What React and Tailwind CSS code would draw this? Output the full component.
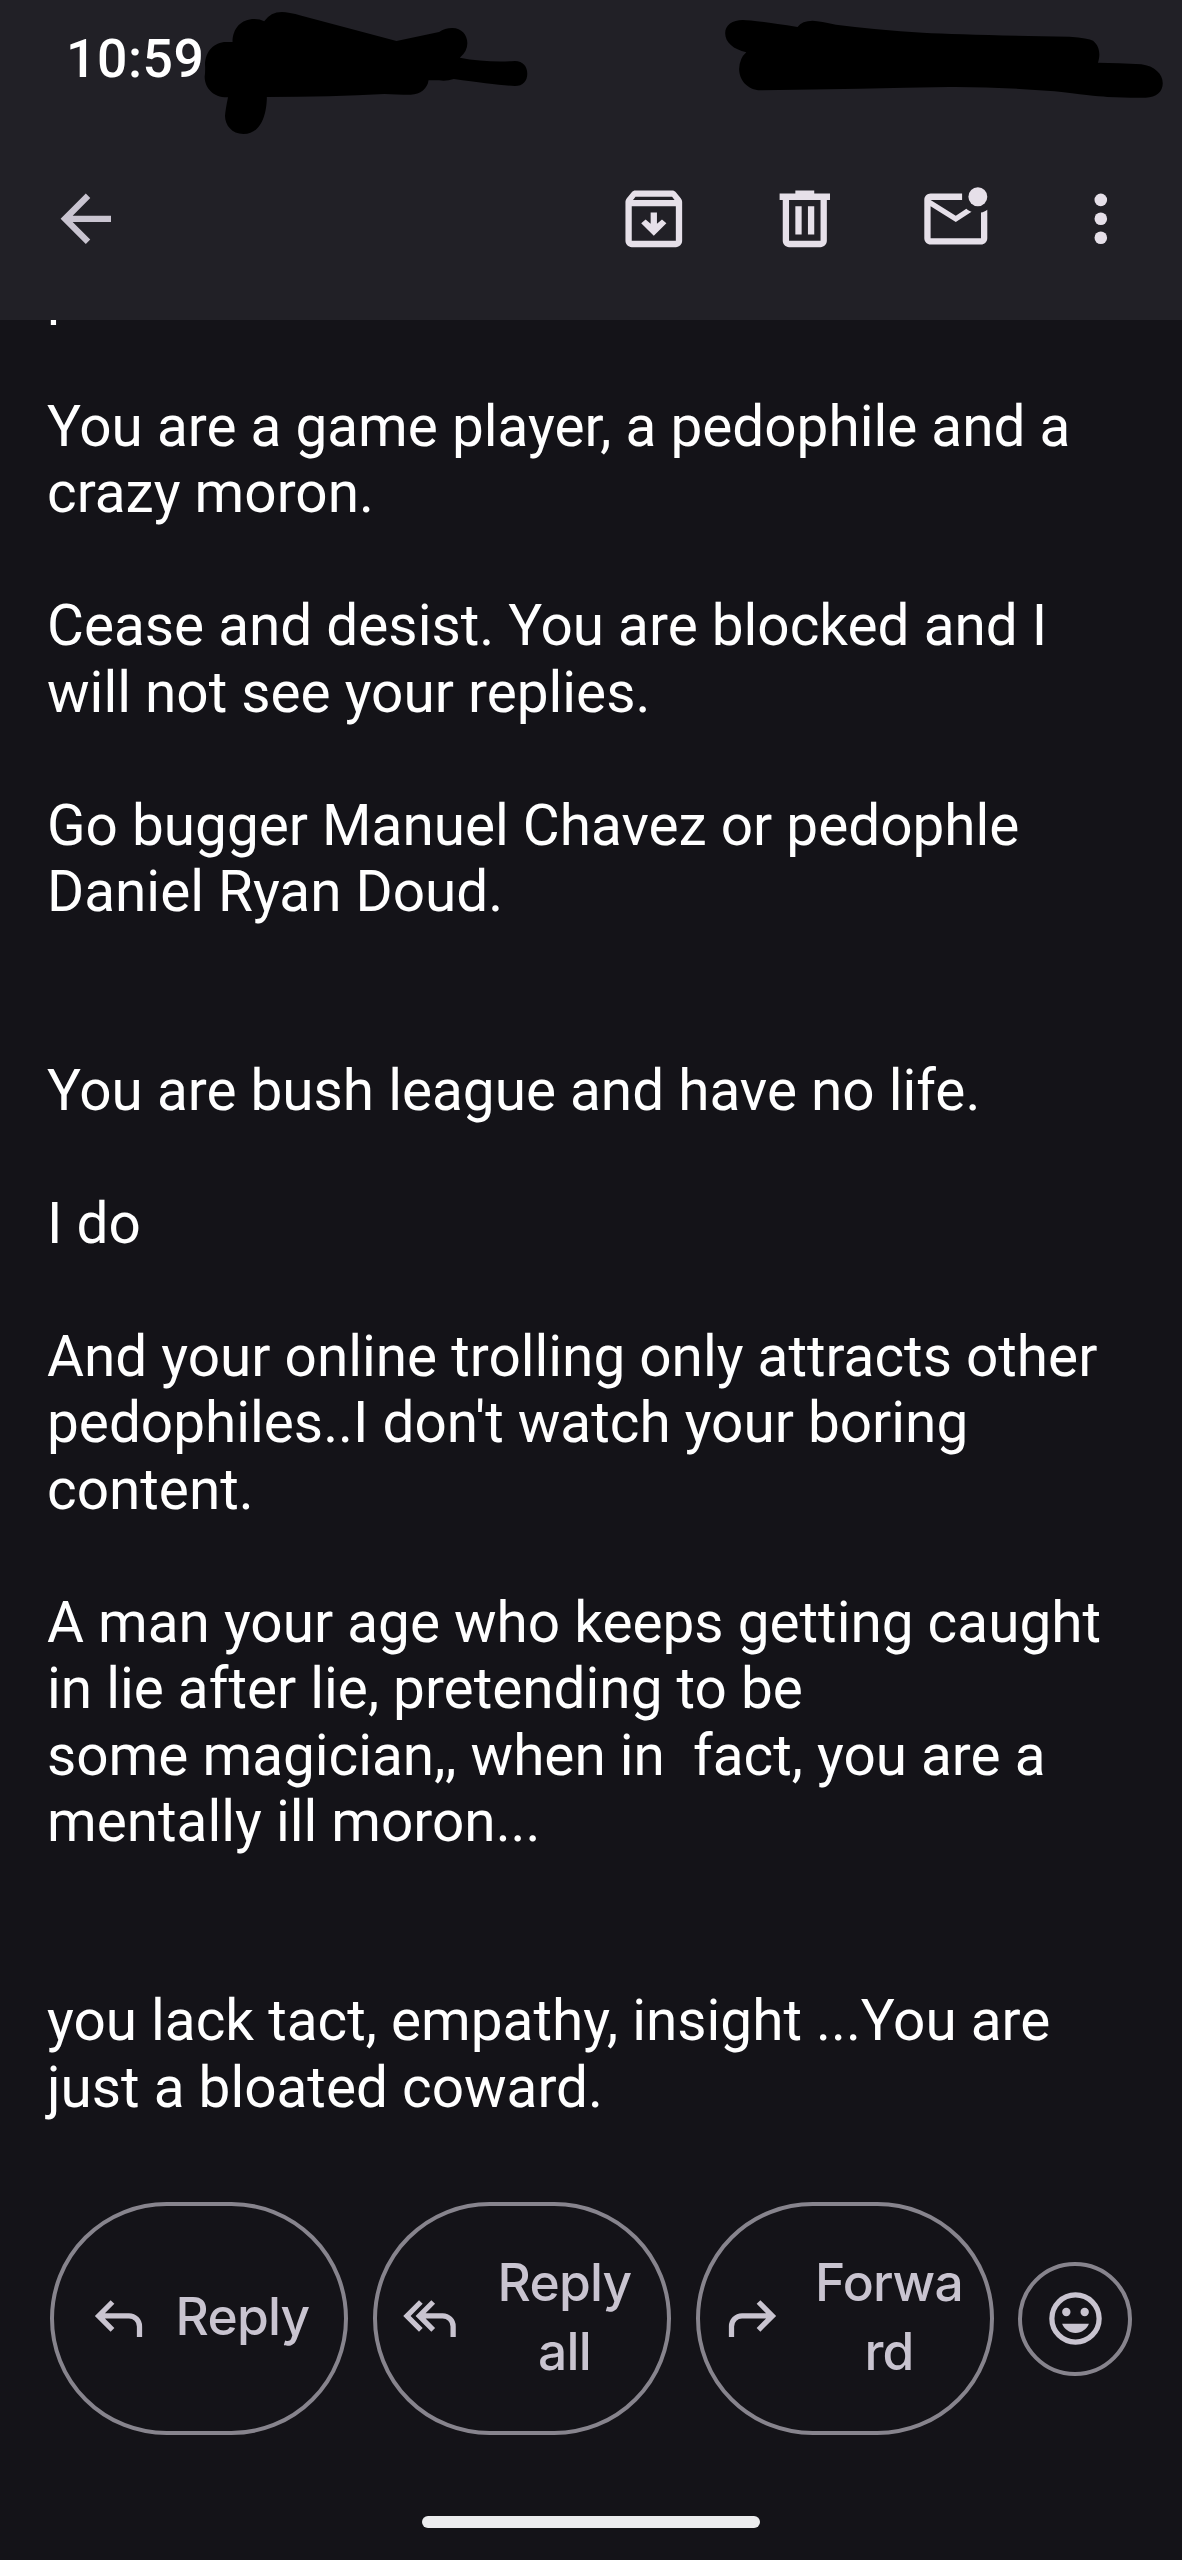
import clsx from 'clsx';

const lines = [
    'p',
    '',
    'You are a game player, a pedophile and a',
    'crazy moron.',
    '',
    'Cease and desist. You are blocked and I',
    'will not see your replies.',
    '',
    'Go bugger Manuel Chavez or pedophle',
    'Daniel Ryan Doud.',
    '',
    '',
    'You are bush league and have no life.',
    '',
    'I do',
    '',
    'And your online trolling only attracts other',
    "pedophiles..I don't watch your boring",
    'content.',
    '',
    'A man your age who keeps getting caught',
    'in lie after lie, pretending to be',
    'some magician,, when in  fact, you are a',
    'mentally ill moron...',
    '',
    '',
    'you lack tact, empathy, insight ...You are',
    'just a bloated coward.',
];

const Icon = ({ children, className }) => (
    <svg viewBox="0 0 24 24" fill="currentColor" className={clsx('shrink-0', className)}>
        {children}
    </svg>
);

const BackIcon = () => (
    <Icon className="size-[75.6px] text-[#c9c4d0]">
        <path d="M20 11H7.83l5.59-5.59L12 4l-8 8 8 8 1.41-1.41L7.83 13H20v-2z" />
    </Icon>
);

const ArchiveIcon = () => (
    <Icon className="size-[75.6px]">
        <path
            fillRule="evenodd"
            d="M6.2 3h11.6c.5 0 .9.2 1.2.6l1.5 1.8c.3.4.5.8.5 1.3V19c0 1.1-.9 2-2 2H5c-1.1 0-2-.9-2-2V6.7c0-.5.2-.9.5-1.3L5 3.6c.3-.4.7-.6 1.2-.6zM6.2 5l-.8 1h13.2l-.8-1H6.2zM5 8v11h14V8H5z"
        />
        <path d="M11 10h2v3.6l1.6-1.4 1.4 1.2-4 4-4-4 1.4-1.2 1.6 1.4z" />
    </Icon>
);

const TrashIcon = () => (
    <Icon className="size-[75.6px]">
        <path
            fillRule="evenodd"
            d="M9 3h6v1h5v2h-1v13c0 1.1-.9 2-2 2H7c-1.1 0-2-.9-2-2V6H4V4h5V3zM7 6v13h10V6H7z"
        />
        <path d="M9 8h2v9H9zM13 8h2v9h-2z" />
    </Icon>
);

const UnreadIcon = () => (
    <Icon className="size-[75.6px]">
        <path d="M14 4H4c-1.1 0-2 .9-2 2v12.2c0 1.1.9 2 2 2h16c1.1 0 2-.9 2-2V9.1c-.6.45-1.27.75-2 .9v8.2H4V8l8 5 5-3.2c-.6-.25-1.2-.6-1.65-1L12 11 4 6h10z" />
        <circle cx="19" cy="5" r="3" />
    </Icon>
);

const MoreIcon = () => (
    <Icon className="size-[75.6px]">
        <circle cx="12" cy="6" r="2" />
        <circle cx="12" cy="12" r="2" />
        <circle cx="12" cy="18" r="2" />
    </Icon>
);

const ReplyIcon = ({ className }) => (
    <Icon className={clsx('size-[63px]', className)}>
        <path d="M19 19v-4q0-1.25-.875-2.125T16 12H6.825l3.6 3.6L9 17l-6-6 6-6 1.425 1.4-3.6 3.6H16q2.075 0 3.538 1.463T21 15v4z" />
    </Icon>
);

const ReplyAllIcon = () => (
    <Icon className="size-[63px]">
        <path d="M8 17l-6-6 6-6 1.4 1.4L4.8 11l4.6 4.6zM20 19v-4q0-1.25-.875-2.125T17 12h-6.475l3.6 3.6L12.7 17l-6-6 6-6 1.425 1.4-3.6 3.6H17q2.075 0 3.538 1.463T22 15v4z" />
    </Icon>
);

const EmojiIcon = () => (
    <Icon className="size-[63px]">
        <circle cx="12" cy="12" r="9" fill="none" stroke="currentColor" strokeWidth="2" />
        <circle cx="8.5" cy="9.5" r="1.6" />
        <circle cx="15.5" cy="9.5" r="1.6" />
        <path d="M12 17.5c2.33 0 4.31-1.46 5.11-3.5H6.89c.8 2.04 2.78 3.5 5.11 3.5z" />
    </Icon>
);

// marker strokes drawn over the status bar
const Scribbles = () => (
    <svg viewBox="0 0 1182 140" className="absolute left-0 top-0 h-[140px] w-[1182px]">
        <g transform="scale(.3769 .3333)">
            <path d="M617 126C617 85 640 57 675 57Q690 57 701 64Q718 36 748 36Q765 36 800 47L1052 123L1165 96Q1180 84 1200 84C1225 84 1240 105 1240 130Q1240 155 1220 173Q1290 188 1366 183C1388 183 1399 200 1399 221C1399 242 1388 258 1366 258Q1310 254 1204 237Q1185 244 1165 241H1137C1135 265 1115 284 1090 284Q1050 284 1020 282Q880 291 708 291C708 330 698 402 646 402C615 402 597 375 597 348Q598 330 605 292C565 293 543 262 543 230Q545 215 544 195C544 155 568 126 600 126Z" />
        </g>
        <g transform="translate(591 0) scale(.3769 .3333)">
            <path d="M403 60Q430 60 548 81Q560 62 588 62Q610 64 650 74Q760 90 880 98Q1000 105 1270 110Q1320 114 1332 122C1350 138 1352 165 1345 188Q1400 189 1460 193C1495 198 1517 222 1517 250C1517 275 1500 293 1472 293Q1430 294 1370 291Q1330 288 1230 274Q1080 260 950 261Q720 266 450 271C415 270 393 240 393 207Q394 175 412 157C378 148 356 128 356 100C356 75 375 60 403 60Z" />
        </g>
    </svg>
);

const ActionButton = ({ children, className }) => (
    <button
        className={clsx(
            'flex h-[233px] w-[298px] shrink-0 items-center rounded-full border-4 border-[#87848d]',
            className
        )}
    >
        {children}
    </button>
);

const ActionLabel = ({ children }) => (
    <span className="w-[155px] pb-[4px] text-center font-['Inter'] text-[51.5px] font-medium leading-[68.3px] tracking-[-0.015em]">
        {children}
    </span>
);

export default function App() {
    return (
        <div className="flex h-[2560px] w-[1182px] flex-col overflow-hidden bg-[#141318] font-['Roboto',sans-serif]">
            <header className="relative flex h-[320px] shrink-0 flex-col bg-[#212026]">
                <div className="flex h-[118px] items-center pl-[66px]">
                    <span className="text-[53.5px] font-medium leading-none tracking-[0.01em] text-white">
                        10:59
                    </span>
                </div>
                <Scribbles />

                <div className="flex items-center justify-between pl-[48px] pr-[43px] pt-[62.5px] text-[#e6e0e9]">
                    <BackIcon />
                    <div className="flex">
                        <ArchiveIcon />
                        <div className="ml-[76px]">
                            <TrashIcon />
                        </div>
                        <div className="ml-[75px]">
                            <UnreadIcon />
                        </div>
                        <div className="ml-[70px]">
                            <MoreIcon />
                        </div>
                    </div>
                </div>
            </header>

            <main className="h-[1882px] shrink-0 overflow-hidden pl-[47px]">
                <div className="-mt-[59px] text-[56.7px] leading-[66.45px] text-white">
                    {lines.map((line, i) => (
                        <p key={i} className="h-[66.45px] whitespace-pre">
                            {line}
                        </p>
                    ))}
                </div>
            </main>

            <footer className="flex items-center pl-[50px] text-[#c9c4d0]">
                <ActionButton className="gap-[15px] pl-[33px]">
                    <ReplyIcon />
                    <ActionLabel>Reply</ActionLabel>
                </ActionButton>
                <ActionButton className="ml-[25px] gap-[26px] pl-[21px]">
                    <ReplyAllIcon />
                    <ActionLabel>
                        Reply
                        <br />
                        all
                    </ActionLabel>
                </ActionButton>
                <ActionButton className="ml-[24.5px] gap-[28px] pl-[21px]">
                    <ReplyIcon className="-scale-x-100" />
                    <ActionLabel>
                        Forwa
                        <br />
                        rd
                    </ActionLabel>
                </ActionButton>
                <button className="ml-[24.5px] flex size-[114px] shrink-0 items-center justify-center rounded-full border-4 border-[#87848d]">
                    <EmojiIcon />
                </button>
            </footer>

            <div className="mt-[81px] h-[12px] w-[338px] self-center rounded-full bg-[#ededef]" />
        </div>
    );
}
